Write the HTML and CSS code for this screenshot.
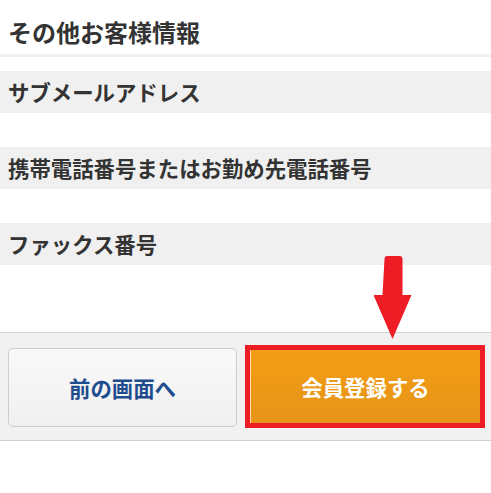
FILE: index.html
```html
<!DOCTYPE html>
<html lang="ja">
<head>
<meta charset="utf-8">
<link rel="stylesheet" href="styles.css">
</head>
<body>
<div class="page">
  <h2 class="title">その他お客様情報</h2>
  <div class="field"><div class="label">サブメールアドレス</div><div class="value"></div></div>
  <div class="field"><div class="label">携帯電話番号またはお勤め先電話番号</div><div class="value"></div></div>
  <div class="field"><div class="label">ファックス番号</div><div class="value"></div></div>
  <div class="spacer"></div>
  <div class="footer">
    <button class="btn btn-back">前の画面へ</button>
    <div class="highlight"><button class="btn btn-submit">会員登録する</button></div>
  </div>
  <svg class="arrow" width="38" height="83" viewBox="0 0 38 83">
    <path d="M11 3 Q11 0 14 0 L26 0 Q29 0 29 3 L29 39 L38 39 L19 83 L0 39 L9 39 Z" fill="#ee1c25" transform="translate(-0.5 0)"/>
  </svg>
</div>
</body>
</html>
```
FILE: styles.css
```css
html, body { margin: 0; padding: 0; background: #fff; }
body { font-family: "Noto Sans CJK JP", "Noto Sans", sans-serif; color: #333; }
.page { position: relative; width: 491px; height: 493px; overflow: hidden; }
.title {
  margin: 0;
  padding: 20px 8px 0;
  height: 34px;
  font-size: 24px;
  line-height: 24px;
  font-weight: 700;
  border-bottom: 3px solid #f0f0f0;
  margin-bottom: 14px;
}
.field .label {
  background: #f0f0f0;
  height: 42px;
  line-height: 42px;
  padding: 0 8px;
  font-size: 21.4px;
  font-weight: 700;
  white-space: nowrap;
}
.field .value { height: 34px; }
.spacer { height: 33px; }
.footer {
  border-top: 1px solid #d2d2d2;
  border-bottom: 1px solid #d2d2d2;
  background: #f1f1f1;
  height: 107px;
  display: flex;
  align-items: center;
  padding: 0 6px 0 8px;
  gap: 8px;
}
.btn {
  font-family: "Noto Sans CJK JP", "Noto Sans", sans-serif;
  font-weight: 700;
  font-size: 21.4px;
  cursor: pointer;
  margin: 0;
}
.btn-back {
  width: 229px;
  height: 79px;
  margin-top: 1px;
  border: 1px solid #cdcdcd;
  border-radius: 5px;
  background: linear-gradient(#f9f9f9, #f0f0f0);
  color: #1e4d8f;
}
.highlight {
  width: 230px;
  height: 73px;
  border: 5px solid #ee1c25;
}
.btn-submit {
  width: 100%;
  height: 100%;
  border: 0;
  border-left: 1px solid #f4dcb0;
  background: linear-gradient(#f29e14, #e79318);
  color: #fff;
}
.arrow { position: absolute; left: 374px; top: 256px; }
```
